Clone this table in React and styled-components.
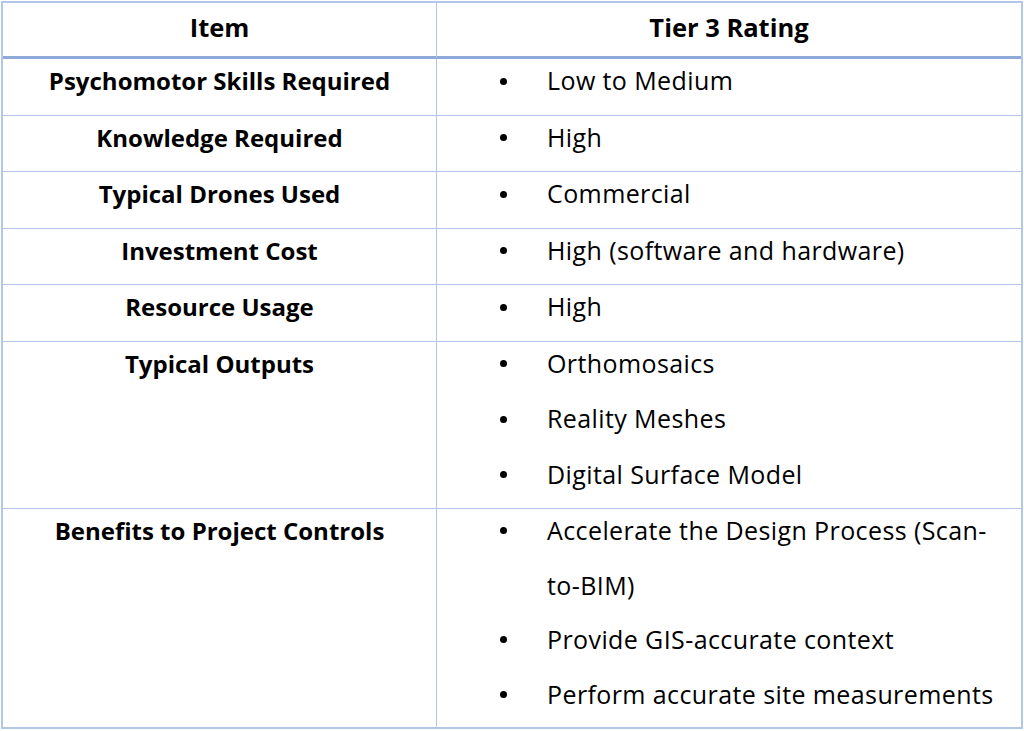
import React from "react";
import styled, { createGlobalStyle } from "styled-components";

const Global = createGlobalStyle`
  html, body { margin: 0; padding: 0; background: #ffffff; }
  body { font-family: "Open Sans", "Noto Sans", sans-serif; color: #000; }
`;

const Page = styled.div`
  padding: 1px 0 0 1px;
`;

const Table = styled.table`
  width: 1022px;
  border-collapse: separate;
  border-spacing: 0;
  border: 2px solid #b4c6e7;
  table-layout: fixed;
  font-size: 25px;
  letter-spacing: 0.4px;
`;

const ItemCol = styled.col`
  width: 434px;
`;

const HeadCell = styled.th`
  height: 47px;
  padding: 0 0 6px;
  font-size: 25.5px;
  font-weight: 700;
  letter-spacing: 0;
  text-align: center;
  vertical-align: middle;
  border-bottom: 3px solid #8eaadb;
  border-right: ${(p) => (p.$first ? "1px solid #b4c6e7" : "none")};
`;

const Row = styled.tr`
  & > td {
    border-bottom: ${(p) => (p.$last ? "none" : "1px solid #b4c6e7")};
  }
`;

const NameCell = styled.td`
  padding: 0 0 6px;
  vertical-align: top;
  text-align: center;
  font-size: 24px;
  font-weight: 700;
  letter-spacing: 0;
  border-right: 1px solid #b4c6e7;
`;

const ValueCell = styled.td`
  padding: 0 0 6px;
  vertical-align: top;
`;

const Line = styled.div`
  line-height: 55.5px;
  margin-top: -6px;
`;

const List = styled.ul`
  list-style: none;
  margin: -6px 0 0;
  padding: 0 8px 0 110px;
  line-height: ${(p) => p.$lh}px;
`;

const Bullet = styled.li`
  position: relative;
  &::before {
    content: "";
    position: absolute;
    left: -47px;
    top: ${(p) => p.$lh / 2 - 3}px;
    width: 7px;
    height: 7px;
    border-radius: 50%;
    background: #000;
  }
`;

const rows = [
  { name: "Psychomotor Skills Required", items: ["Low to Medium"] },
  { name: "Knowledge Required", items: ["High"] },
  { name: "Typical Drones Used", items: ["Commercial"] },
  { name: "Investment Cost", items: ["High (software and hardware)"] },
  { name: "Resource Usage", items: ["High"] },
  {
    name: "Typical Outputs",
    items: ["Orthomosaics", "Reality Meshes", "Digital Surface Model"],
  },
  {
    name: "Benefits to Project Controls",
    lh: 54.5,
    items: [
      "Accelerate the Design Process (Scan-to-BIM)",
      "Provide GIS-accurate context",
      "Perform accurate site measurements",
    ],
  },
];

export default function App() {
  return (
    <>
      <Global />
      <Page>
        <Table>
          <colgroup>
            <ItemCol />
            <col />
          </colgroup>
          <thead>
            <tr>
              <HeadCell $first>Item</HeadCell>
              <HeadCell>Tier 3 Rating</HeadCell>
            </tr>
          </thead>
          <tbody>
            {rows.map((r, i) => {
              const lh = r.lh || 55.5;
              return (
                <Row key={r.name} $last={i === rows.length - 1}>
                  <NameCell>
                    <Line>{r.name}</Line>
                  </NameCell>
                  <ValueCell>
                    <List $lh={lh}>
                      {r.items.map((it) => (
                        <Bullet key={it} $lh={lh}>
                          {it}
                        </Bullet>
                      ))}
                    </List>
                  </ValueCell>
                </Row>
              );
            })}
          </tbody>
        </Table>
      </Page>
    </>
  );
}
